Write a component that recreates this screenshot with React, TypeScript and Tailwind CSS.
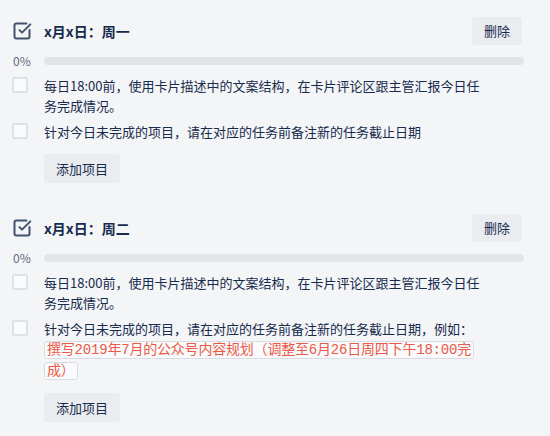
import { SquareCheckBig } from "lucide-react";

interface IChecklist {
  title: string;
  items: React.ReactNode[];
}

const checklists: IChecklist[] = [
  {
    title: "x月x日：周一",
    items: [
      "每日18:00前，使用卡片描述中的文案结构，在卡片评论区跟主管汇报今日任务完成情况。",
      "针对今日未完成的项目，请在对应的任务前备注新的任务截止日期",
    ],
  },
  {
    title: "x月x日：周二",
    items: [
      "每日18:00前，使用卡片描述中的文案结构，在卡片评论区跟主管汇报今日任务完成情况。",
      <>
        针对今日未完成的项目，请在对应的任务前备注新的任务截止日期，例如：
        <code className="box-decoration-clone rounded-[3px] border border-[#d9dce2] bg-[#f9fafc] px-[2px] font-['Liberation_Mono','Noto_Sans_CJK_SC',monospace] text-[14px] tracking-[-0.2px] text-[#eb5a46]">
          撰写2019年7月的公众号内容规划（调整至6月26日周四下午18:00完成）
        </code>
      </>,
    ],
  },
];

const CheckItem = ({ text }: { text: React.ReactNode }) => (
  <div className="flex">
    <div className="w-8 shrink-0 pt-[1px]">
      <span className="block h-4 w-4 rounded-[2px] border-2 border-[#dfe1e6] bg-[#fafbfc]" />
    </div>
    <div className="w-[439px] text-[13px] leading-5 text-[#172b4d]">{text}</div>
  </div>
);

const Checklist = ({ title, items }: IChecklist) => (
  <div className="flex flex-col">
    {/* header */}
    <div className="flex h-7 items-center">
      <div className="w-8 shrink-0">
        <SquareCheckBig size={20} strokeWidth={2.4} className="text-[#42526e]" />
      </div>
      <h3 className="flex-1 text-[14px] font-bold text-[#172b4d]">{title}</h3>
      <button className="mr-[2px] h-7 rounded-[3px] bg-[#ebecf0] px-3 text-[13px] text-[#172b4d]">
        删除
      </button>
    </div>

    {/* progress */}
    <div className="mt-3 flex h-2 items-center">
      <span className="w-8 shrink-0 pl-[1px] text-[12px] text-[#5e6c84]">0%</span>
      <div className="h-2 flex-1 rounded-full bg-[#e2e4e9]" />
    </div>

    <div className="mt-[11px] flex flex-col gap-[6px]">
      {items.map((item, i) => (
        <CheckItem text={item} key={i} />
      ))}
    </div>

    <div className="mt-3 pl-8">
      <button className="h-[29px] rounded-[3px] bg-[#ebecf0] px-3 text-[13px] text-[#172b4d]">
        添加项目
      </button>
    </div>
  </div>
);

export default function App() {
  return (
    <div className="min-h-[436px] bg-[#f4f5f7] pb-4 pl-3 pr-[26px] pt-[17px] font-['Noto_Sans_CJK_SC','Noto_Sans',sans-serif]">
      <div className="flex flex-col gap-[31px]">
        {checklists.map((list) => (
          <Checklist key={list.title} title={list.title} items={list.items} />
        ))}
      </div>
    </div>
  );
}
